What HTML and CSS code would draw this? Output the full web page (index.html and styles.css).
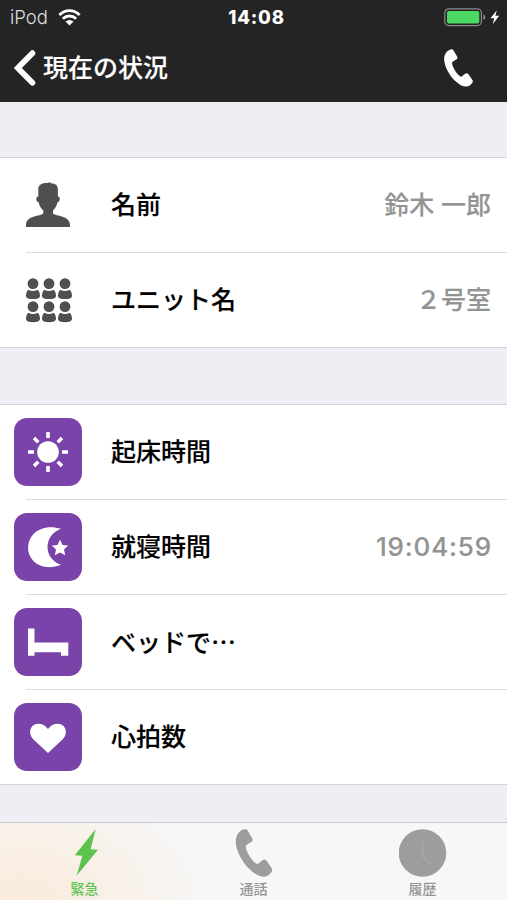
FILE: index.html
```html
<!DOCTYPE html>
<html lang="ja">
<head>
<meta charset="utf-8">
<title>現在の状況</title>
<link rel="stylesheet" href="styles.css">
</head>
<body>
<svg class="defs" aria-hidden="true">
  <symbol id="phone" viewBox="0 0 37 48">
    <path d="M8.7.3C10.5-.1 11.4.4 12.2 1.7L16.7 9.3C17.5 10.8 17.3 12 16.2 12.8L11.5 15.6C10 16.6 10 18.5 11 21C13 26 16.5 31.6 20.5 34.6C21.6 35.4 22.5 35.1 23.3 34.3L27 31.3C28.4 30.2 30 30.4 31 31.7L36.1 39C37 40.4 36.9 41.8 36 43C34.2 45.5 31.8 47.3 29 47.7C25 48.2 19.5 45.5 14.4 40.6C7 33.5.8 22.5.2 13C0 7 3.5 1.5 8.7.3Z"/>
  </symbol>
  <symbol id="member" viewBox="0 0 14 21">
    <circle cx="7" cy="5.4" r="5.4"/>
    <path d="M2.3 11.5Q7 14 11.7 11.5C13.3 13 14 15 14 17.5C14 20 11 21 7 21S0 20 0 17.5C0 15 .7 13 2.3 11.5Z"/>
  </symbol>
</svg>

<header class="top">
  <div class="status">
    <div class="carrier">
      <span>iPod</span>
      <svg class="wifi" viewBox="0 0 22 17">
        <g fill="none" stroke="#fff" stroke-width="2.9"><path d="M.9 6C6.6.1 15.4.1 21.1 6"/><path d="M4.4 9.7C8.2 6 13.8 6 17.6 9.7"/></g>
        <path fill="#fff" d="M11 16.5L7 12.6Q11 9.6 15 12.6Z"/>
      </svg>
    </div>
    <time class="clock">14:08</time>
    <svg class="battery" viewBox="0 0 56 19">
      <rect x=".8" y=".8" width="36.6" height="16.8" rx="4" fill="none" stroke="#8b8b8b" stroke-width="1.2"/>
      <rect x="3" y="3" width="32.3" height="12.4" rx="1.8" fill="#4bd964"/>
      <path d="M39.3 6.3Q41.3 7.2 41.3 9.2T39.3 12.1Z" fill="#8b8b8b"/>
      <path d="M52.8 2.2L46.5 10.2H50.2L48.7 16.2L55.2 7.8H51.4Z" fill="#fff"/>
    </svg>
  </div>
  <div class="nav">
    <svg class="back" viewBox="0 0 22 36"><path d="M18.4 3.2L3.8 18L18.4 32.8" fill="none" stroke="#fff" stroke-width="5.8" stroke-linecap="round"/></svg>
    <h1>現在の状況</h1>
    <svg class="call"><use href="#phone"/></svg>
  </div>
</header>

<main>
  <section class="group">
    <div class="row">
      <div class="icon">
        <svg class="person" viewBox="0 0 44 45"><path d="M12.3 5.5C13.5 2 17 .5 21.3 1L24 .2L25.5 1.5C29.5 1.3 31.9 3.5 31.9 7.5V14.4C34.6 14.1 34.3 19.5 31.6 20.3C30.5 24.5 29 26.5 27 28.5V31.5C30 34.5 43.7 33 44 43V45H0V43C.3 33 14.5 34.5 17.3 31.5V28.5C15.3 26.5 13.6 24.5 12.6 20.3C9.7 19.5 9.5 14 12.3 14.4Z"/></svg>
      </div>
      <span class="label">名前</span><span class="value">鈴木 一郎</span>
    </div>
    <div class="row">
      <div class="icon members">
        <svg><use href="#member"/></svg><svg><use href="#member"/></svg><svg><use href="#member"/></svg>
        <svg><use href="#member"/></svg><svg><use href="#member"/></svg><svg><use href="#member"/></svg>
      </div>
      <span class="label">ユニット名</span><span class="value">２号室</span>
    </div>
  </section>

  <section class="group vitals">
    <div class="row">
      <svg class="tile" viewBox="0 0 68 68">
        <circle cx="34" cy="34" r="10.8"/>
        <path class="rays" d="M34 14V20M34 48V54M14 34H20M48 34H54M20 20L24.3 24.3M43.7 43.7L48 48M48 20L43.7 24.3M24.3 43.7L20 48"/>
      </svg>
      <span class="label">起床時間</span>
    </div>
    <div class="row">
      <svg class="tile" viewBox="0 0 68 68">
        <path d="M47 15.8C37 12.5 26 14 19.5 21C12.5 28.5 12.2 40 19 47.5C25.5 54.8 37 56 47 51.8C38 48.5 33.5 41.5 33.5 34S38 19.2 47 15.8Z"/>
        <path d="M46 26.5L48.5 31.9L54.2 32.5L50 36.5L51.2 42.3L46 39.4L40.8 42.3L42 36.5L37.8 32.5L43.5 31.9Z"/>
      </svg>
      <span class="label">就寝時間</span><span class="value time">19:04:59</span>
    </div>
    <div class="row">
      <svg class="tile" viewBox="0 0 68 68"><path d="M14 20.5H20.5V34.5H54.3V47.8H47V44.3H20.5V47.8H14Z"/></svg>
      <span class="label">ベッドで<span class="dots">…</span></span>
    </div>
    <div class="row">
      <svg class="tile" viewBox="0 0 68 68"><path d="M34 50L19.5 36.5C15.5 32.5 15 26.5 18.5 23C23 19 30 20.5 34 26C38 20.5 45 19 49.5 23C53 26.5 52.5 32.5 48.5 36.5Z"/></svg>
      <span class="label">心拍数</span>
    </div>
  </section>
</main>

<nav class="tabs">
  <div class="tab active">
    <svg viewBox="0 0 48 48"><path d="M34.7 0L13.8 26.2L21.4 26.8L15.6 46.7L37 20.8L29.6 20.2Z"/></svg>
    <span>緊急</span>
  </div>
  <div class="tab">
    <svg viewBox="0 0 48 48"><use href="#phone" x="5.5" width="37" height="48"/></svg>
    <span>通話</span>
  </div>
  <div class="tab">
    <svg viewBox="0 0 48 48"><circle cx="23.5" cy="24" r="23.8"/><path class="hands" d="M23.5 11.5V27L32 35.500"/></svg>
    <span>履歴</span>
  </div>
</nav>
</body>
</html>
```
FILE: styles.css
```css
* { box-sizing: border-box; }

body {
  margin: 0;
  height: 900px;
  display: flex;
  flex-direction: column;
  overflow: hidden;
  background: #efeef4;
  color: #000;
  font-family: Inter, "Noto Sans CJK JP", sans-serif;
}

svg { display: block; flex: none; }
.defs { position: absolute; width: 0; height: 0; }

.top {
  height: 102px;
  background: #242424;
  color: #fff;
}

.status {
  height: 34px;
  padding: 0 7px 0 10px;
  display: grid;
  grid-template-columns: 1fr auto 1fr;
  align-items: center;
}

.carrier {
  display: flex;
  align-items: center;
  gap: 10px;
  color: #dedede;
  font-size: 18.5px;
  font-weight: 300;
}

.wifi { width: 23px; height: 17px; }

.clock {
  margin-left: 3px;
  font-size: 18.5px;
  font-weight: 800;
  letter-spacing: .8px;
}

.battery { width: 56px; height: 19px; justify-self: end; }

.nav {
  height: 67px;
  padding: 0 34px 0 14px;
  display: flex;
  align-items: center;
}

.back { width: 22px; height: 36px; }

h1 {
  margin: 0 0 0 7px;
  font-size: 25px;
  font-weight: 500;
  line-height: 36px;
  -webkit-text-stroke: .15px;
}

.call { width: 29px; height: 38px; margin-left: auto; fill: #fff; }

main { flex: 1; padding-top: 55px; }

.group {
  background: #fff;
  border-top: 1px solid #d3d2d6;
  border-bottom: 1px solid #d3d2d6;
}

.vitals { margin-top: 56px; }

.row {
  position: relative;
  height: 95px;
  padding: 0 16px 2px 14px;
  display: flex;
  align-items: center;
}

.row:last-child { height: 94px; padding-bottom: 0; }

.row:not(:last-child)::after {
  content: "";
  position: absolute;
  left: 26px;
  right: 0;
  bottom: 0;
  height: 1px;
  background: #dcdcdf;
}

.icon {
  width: 68px;
  display: flex;
  justify-content: center;
  fill: #4f4f4f;
}

.person { width: 44px; height: 45px; }

.members {
  display: grid;
  grid-template-columns: repeat(3, 14px);
  gap: 2px;
  padding-left: 1px;
}

.members svg { width: 14px; height: 21.5px; }

.tile {
  width: 68px;
  height: 68px;
  border-radius: 13px;
  background: #7a43aa;
  fill: #fff;
}

.rays { stroke: #fff; stroke-width: 3.5; }

.label {
  margin-left: 29px;
  font-size: 25px;
  font-weight: 500;
  line-height: 36px;
  -webkit-text-stroke: .15px;
}

.dots { font-family: "Noto Sans CJK JP", sans-serif; }

.value {
  margin-left: auto;
  color: #929494;
  font-size: 25px;
  font-weight: 500;
  line-height: 36px;
  -webkit-text-stroke: .15px;
}

.time { font-size: 26px; letter-spacing: .85px; margin-right: -1px; }

.tabs {
  height: 78px;
  border-top: 1px solid #c9c8cf;
  display: grid;
  grid-template-columns: repeat(3, 1fr);
  background: radial-gradient(ellipse 190px 120px at 20px 75px, #faebdc 0, #f9efe5 40%, #f7f7f7 100%);
}

.tab {
  display: flex;
  flex-direction: column;
  align-items: center;
  padding-top: 6px;
  color: #969696;
  fill: #9d9d9d;
  font-size: 14px;
  font-weight: 500;
  line-height: 20px;
}

.tab svg { width: 48px; height: 48px; margin-bottom: 2px; }
.active { color: #5fc557; fill: #5cc44c; }
.hands { fill: none; stroke: #a9a9a9; stroke-width: 1.5; }
```
